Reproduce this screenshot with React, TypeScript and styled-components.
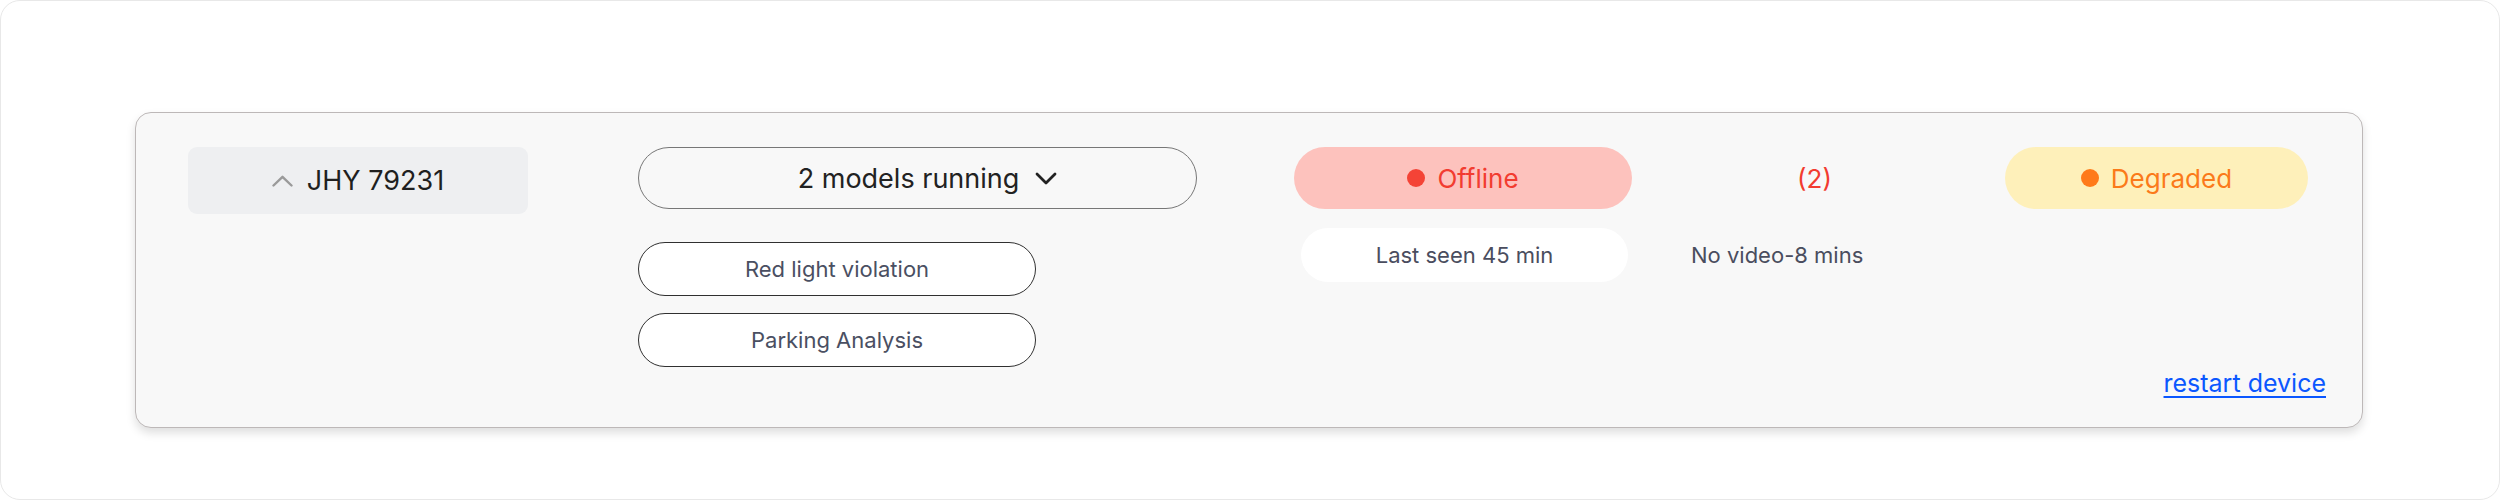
import React from "react";
import styled, { createGlobalStyle } from "styled-components";

const Global = createGlobalStyle`
  html, body { margin: 0; padding: 0; background: #ffffff; }
  body { font-family: Inter, "Noto Sans", "Liberation Sans", sans-serif; }
  * { box-sizing: border-box; }
`;

const Frame = styled.div`
  width: 2500px;
  height: 500px;
  border: 1px solid #e8e8e8;
  border-radius: 20px;
  background: #ffffff;
  padding: 111px 136px 0 134px;
`;

const Card = styled.div`
  height: 316px;
  background: #f8f8f8;
  border: 1.5px solid #bdb8b8;
  border-radius: 16px;
  box-shadow: 0 5px 10px rgba(0, 0, 0, 0.13);
  padding: 34px 36px 30px 52px;
  display: flex;
  align-items: stretch;
`;

const Column = styled.div<{ $width: number; $gap?: number; $ml?: number }>`
  width: ${(p) => p.$width}px;
  margin-left: ${(p) => p.$ml ?? 0}px;
  flex: none;
  display: flex;
  flex-direction: column;
  align-items: flex-start;
  gap: ${(p) => p.$gap ?? 0}px;
`;

const Plate = styled.div`
  width: 340px;
  height: 67px;
  border-radius: 9px;
  background: #eeeff1;
  display: flex;
  align-items: center;
  justify-content: center;
  gap: 14px;
  font-size: 27px;
  color: #1f1f1f;
`;

const Dropdown = styled.button`
  width: 559px;
  height: 62px;
  border-radius: 31px;
  border: 1.5px solid #777777;
  background: transparent;
  display: flex;
  align-items: center;
  justify-content: center;
  gap: 16px;
  padding: 0 0 0 20px;
  font-family: inherit;
  font-size: 27px;
  color: #222222;
`;

const ModelList = styled.div`
  display: flex;
  flex-direction: column;
  gap: 17px;
  margin-top: 33px;
`;

const ModelPill = styled.div`
  width: 398px;
  height: 54px;
  border-radius: 27px;
  border: 1.5px solid #303030;
  background: #ffffff;
  display: flex;
  align-items: center;
  justify-content: center;
  font-size: 22px;
  color: #4a4f62;
`;

const StatusPill = styled.div<{ $bg: string; $fg: string; $width: number }>`
  width: ${(p) => p.$width}px;
  height: 62px;
  border-radius: 31px;
  background: ${(p) => p.$bg};
  color: ${(p) => p.$fg};
  display: flex;
  align-items: center;
  justify-content: center;
  gap: 12px;
  font-size: 26px;
`;

const Dot = styled.span<{ $color: string; $size: number }>`
  width: ${(p) => p.$size}px;
  height: ${(p) => p.$size}px;
  border-radius: 50%;
  background: ${(p) => p.$color};
  flex: none;
`;

const InfoPill = styled.div`
  width: 327px;
  height: 54px;
  margin-left: 7px;
  border-radius: 27px;
  background: #ffffff;
  display: flex;
  align-items: center;
  justify-content: center;
  font-size: 22px;
  color: #4a4d5e;
`;

const Count = styled.div`
  height: 62px;
  align-self: stretch;
  display: flex;
  align-items: center;
  justify-content: center;
  padding-right: 8px;
  font-size: 26px;
  color: #f23c30;
`;

const Note = styled.div`
  height: 54px;
  display: flex;
  align-items: center;
  margin-left: 59px;
  font-size: 22px;
  color: #4a4d5e;
`;

const RestartLink = styled.a`
  margin-top: auto;
  align-self: flex-end;
  font-size: 25px;
  line-height: 28px;
  color: #0b57ff;
  text-decoration: underline;
  text-underline-offset: 4px;
  text-decoration-thickness: 1.5px;
  cursor: pointer;
`;

const ChevronUp = () => (
  <svg width="21" height="12" viewBox="0 0 21 12" fill="none">
    <path d="M1.5 10.5 L10.5 1.8 L19.5 10.5" stroke="#9a9a9a" strokeWidth="2.4" strokeLinecap="round" strokeLinejoin="round" />
  </svg>
);

const ChevronDown = () => (
  <svg width="22" height="13" viewBox="0 0 22 13" fill="none">
    <path d="M2 2 L11 11 L20 2" stroke="#222222" strokeWidth="2.8" strokeLinecap="round" strokeLinejoin="round" />
  </svg>
);

export default function App() {
  return (
    <>
      <Global />
      <Frame>
        <Card>
          <Column $width={340}>
            <Plate>
              <ChevronUp />
              <span>JHY 79231</span>
            </Plate>
          </Column>
          <Column $width={559} $ml={110}>
            <Dropdown>
              <span>2 models running</span>
              <ChevronDown />
            </Dropdown>
            <ModelList>
              <ModelPill>Red light violation</ModelPill>
              <ModelPill>Parking Analysis</ModelPill>
            </ModelList>
          </Column>
          <Column $width={338} $ml={97} $gap={19}>
            <StatusPill $bg="#fdc2bd" $fg="#f23c30" $width={338}>
              <Dot $color="#f44336" $size={18} />
              <span>Offline</span>
            </StatusPill>
            <InfoPill>Last seen 45 min</InfoPill>
          </Column>
          <Column $width={373} $gap={19}>
            <Count>(2)</Count>
            <Note>No video-8 mins</Note>
          </Column>
          <Column $width={321}>
            <StatusPill $bg="#fef0ba" $fg="#fb7a1a" $width={303}>
              <Dot $color="#ff7a1a" $size={18} />
              <span>Degraded</span>
            </StatusPill>
            <RestartLink>restart device</RestartLink>
          </Column>
        </Card>
      </Frame>
    </>
  );
}
